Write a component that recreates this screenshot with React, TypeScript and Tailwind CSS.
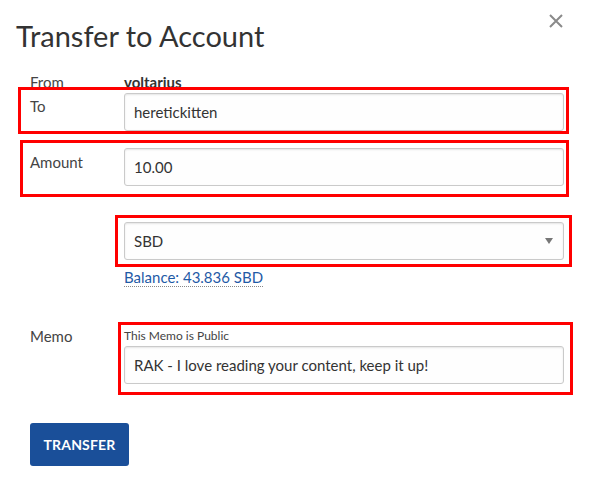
import React from 'react';

const inputCls =
  "w-full h-[38px] rounded-[3px] border border-[#cacaca] bg-[#fefefe] shadow-[inset_0_1px_2px_rgba(0,0,0,0.1)] px-[9px] text-[15px] text-[#333] outline-none font-['Lato',sans-serif]";

// red annotation frame laid over a row
const Mark = ({ cls }: { cls: string }) => (
  <div className={`pointer-events-none absolute border-[3px] border-[#ff0000] ${cls}`}></div>
);

const App: React.FC = () => {
  return (
    <div className="relative w-[593px] h-[496px] overflow-hidden bg-white font-['Lato',sans-serif] text-[#333]">
      <button className="absolute right-[30px] top-[14px] w-[14px] h-[14px] text-[#8a8a8a]">
        <svg viewBox="0 0 14 14" width="14" height="14">
          <path d="M1 1 L13 13 M13 1 L1 13" stroke="currentColor" strokeWidth="2" />
        </svg>
      </button>

      <h1 className="pl-[16px] pt-[19px] text-[29px] leading-[34px] font-normal text-[#333]">
        Transfer to Account
      </h1>

      <div className="flex flex-col pl-[30px] pr-[29px]">
        <div className="flex mt-[19px] text-[15px] leading-[20px]">
          <div className="w-[94px] shrink-0 text-[#444]">From</div>
          <div className="font-bold text-[#333]">voltarius</div>
        </div>

        <div className="relative flex mt-[1px]">
          <Mark cls="-left-[12px] -right-[5px] -top-[6px] -bottom-[3px]" />
          <div className="w-[94px] shrink-0 pt-[3px] text-[15px] leading-[20px] text-[#444]">To</div>
          <input className={inputCls} defaultValue="heretickitten" />
        </div>

        <div className="relative flex mt-[17px]">
          <Mark cls="-left-[10px] -right-[5px] -top-[8px] -bottom-[11px]" />
          <div className="w-[94px] shrink-0 pt-[4px] text-[15px] leading-[20px] text-[#444]">Amount</div>
          <input className={inputCls} defaultValue="10.00" />
        </div>

        <div className="flex mt-[36px]">
          <div className="w-[94px] shrink-0"></div>
          <div className="flex-1 flex flex-col">
            <div className="relative">
              <Mark cls="-left-[9px] -right-[8px] -top-[7px] -bottom-[7px]" />
              <div className={`${inputCls} flex items-center justify-between`}>
                <span>SBD</span>
                <svg viewBox="0 0 8 6" width="8" height="6" className="mr-[1px]">
                  <path d="M0 0 H8 L4 6 Z" fill="#777" />
                </svg>
              </div>
            </div>
            <div className="mt-[5px]">
              <span className="text-[15px] leading-[20px] text-[#1f5aa6] border-b border-dotted border-[#888]">
                Balance: 43.836 SBD
              </span>
            </div>
          </div>
        </div>

        <div className="relative flex mt-[39px]">
          <Mark cls="-left-[-88px] -right-[9px] -top-[6px] -bottom-[11px]" />
          <div className="w-[94px] shrink-0 text-[15px] leading-[16px] text-[#444]">Memo</div>
          <div className="flex-1 flex flex-col">
            <div className="text-[12px] leading-[16px] text-[#444]">This Memo is Public</div>
            <input
              className={`${inputCls} mt-[2px] border-[#8a8a8a] shadow-[0_0_4px_rgba(0,0,0,0.15)]`}
              defaultValue="RAK - I love reading your content, keep it up!"
            />
          </div>
        </div>

        <div className="mt-[39px]">
          <button className="w-[99px] h-[43px] rounded-[3px] bg-[#1a4f99] text-white text-[14px] font-bold tracking-[0.2px]">
            TRANSFER
          </button>
        </div>
      </div>
    </div>
  );
};

export default App;
